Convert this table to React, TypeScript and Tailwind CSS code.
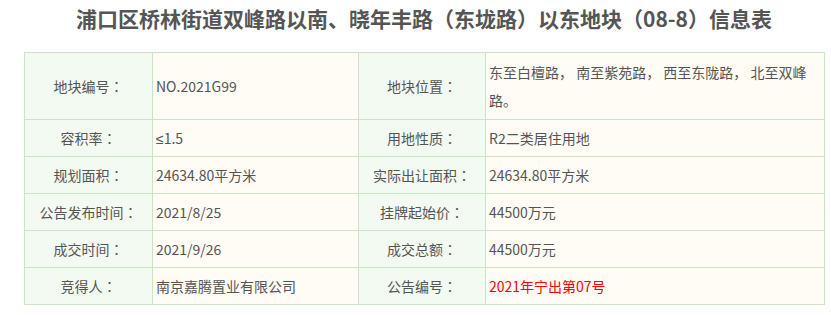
import React from 'react';

interface Row {
  label1: string;
  value1: React.ReactNode;
  label2: string;
  value2: React.ReactNode;
  tall?: boolean;
}

const rows: Row[] = [
  {
    label1: '地块编号',
    value1: 'NO.2021G99',
    label2: '地块位置',
    value2: (
      <>
        东至白檀路， 南至紫苑路， 西至东陇路， 北至双峰
        <br />
        路。
      </>
    ),
    tall: true,
  },
  {
    label1: '容积率',
    value1: (
      <>
        <span className="font-['Liberation_Sans',sans-serif]">≤</span>1.5
      </>
    ),
    label2: '用地性质',
    value2: 'R2二类居住用地',
  },
  { label1: '规划面积', value1: '24634.80平方米', label2: '实际出让面积', value2: '24634.80平方米' },
  { label1: '公告发布时间', value1: '2021/8/25', label2: '挂牌起始价', value2: '44500万元' },
  { label1: '成交时间', value1: '2021/9/26', label2: '成交总额', value2: '44500万元' },
  {
    label1: '竞得人',
    value1: '南京嘉腾置业有限公司',
    label2: '公告编号',
    value2: <span className="text-[#ff0000]">2021年宁出第07号</span>,
  },
];

// centred full-width colon, as in the original page font
function Label({ text }: { text: string }) {
  return (
    <td className="border border-[#cbe4c6] bg-[#f3faf2] p-0 text-center align-middle leading-[28px]">
      {text}
      <span className="font-['Noto_Sans_CJK_JP',sans-serif]">：</span>
    </td>
  );
}

function Value({ children }: { children: React.ReactNode }) {
  return (
    <td className="border border-[#cbe4c6] bg-[#fffcf5] py-0 pl-[3px] pr-0 align-middle leading-[28px]">
      {children}
    </td>
  );
}

export default function App() {
  return (
    <div className="w-[831px] h-[315px] bg-white font-['Noto_Sans_CJK_SC','Noto_Sans',sans-serif] text-[#555]">
      <div className="ml-[24px] w-[800px]">
        <h1 className="h-[52px] pt-[3px] text-center text-[21px] font-bold leading-[30px] text-[#555]">
          浦口区桥林街道双峰路以南、晓年丰路（东垅路）以东地块（08-8）信息表
        </h1>
        <table className="w-[800px] table-fixed border-collapse text-[14px]">
          <colgroup>
            <col className="w-[128px]" />
            <col className="w-[206px]" />
            <col className="w-[127px]" />
            <col className="w-[339px]" />
          </colgroup>
          <tbody>
            {rows.map((r, i) => (
              <tr key={i} className={r.tall ? 'h-[67px]' : 'h-[37px]'}>
                <Label text={r.label1} />
                <Value>{r.value1}</Value>
                <Label text={r.label2} />
                <Value>{r.value2}</Value>
              </tr>
            ))}
          </tbody>
        </table>
      </div>
    </div>
  );
}
